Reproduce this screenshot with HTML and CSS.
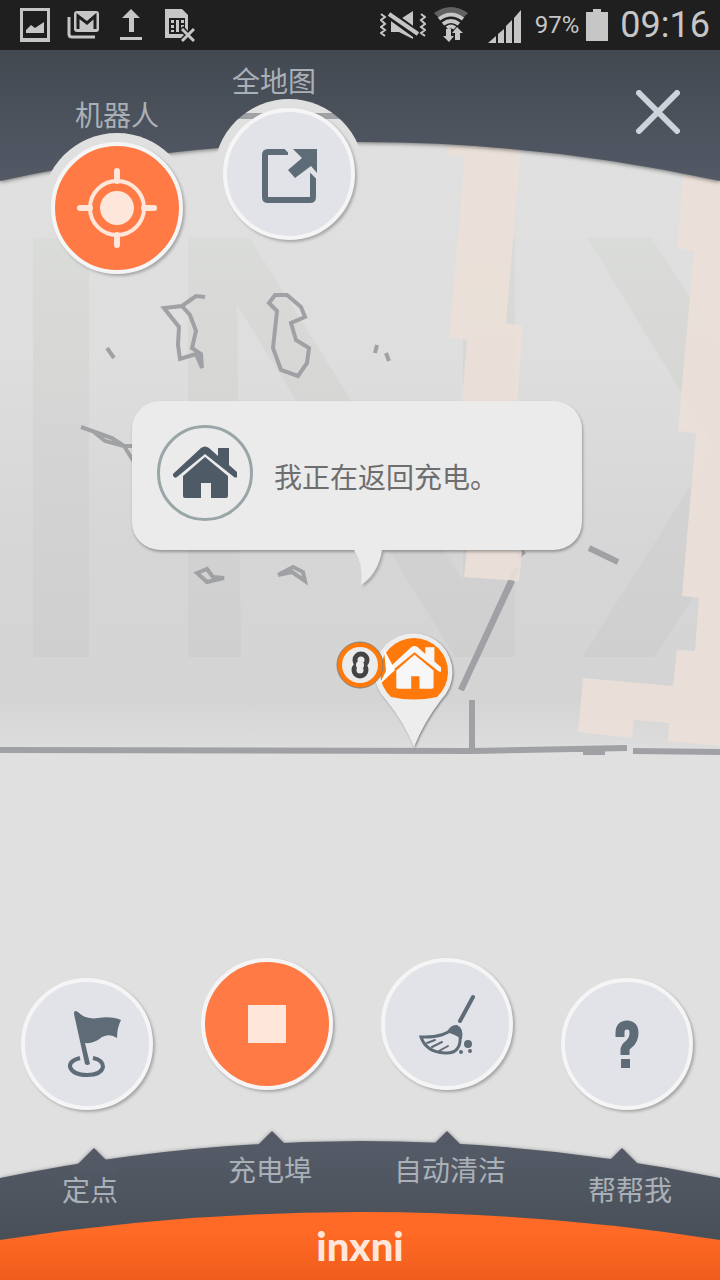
FILE: index.html
```html
<!DOCTYPE html>
<html lang="zh-CN">
  <head>
    <meta charset="UTF-8" />
    <meta name="viewport" content="width=device-width, initial-scale=1.0" />
    <title>inxni</title>

    <link rel="stylesheet" href="styles.css">
  </head>
  <body>
    <div class="status">
      <div class="status-left">
        <svg width="32" height="36" viewBox="0 0 32 36">
          <path d="M1 1h30v34H1zM4 4v27h24V4z" fill-rule="evenodd" />
          <path d="M7 26v-3l5-5 4 3 9-6v11z" />
        </svg>
        <svg width="32" height="36" viewBox="0 0 32 36">
          <path d="M2 10v17q0 3 3 3h23" class="line" stroke-width="3" />
          <rect x="7" y="4" width="25" height="21" rx="3" />
          <path d="M11 22V9l9 7 8-7v13" class="cut" stroke-width="3" />
        </svg>
        <svg width="32" height="36" viewBox="0 0 32 36">
          <path d="M16 2l9 9h-6v14h-5V11H7zM5 30h22v3H5z" />
        </svg>
        <svg width="32" height="36" viewBox="0 0 32 36">
          <path d="M2 2h17l6 6v23H2z" />
          <path d="M6 11h16v16H6z" class="dark" />
          <path d="M8 13h3v3H8zM8 18h3v3H8zM8 23h3v2H8zM13 13h3v12h-3zM18 13h3v3h-3zM18 18h3v3h-3z" />
          <path d="M18 21l14 14M32 21L18 35" class="cut" stroke-width="6" />
          <path d="M19 22l12 12M31 22L19 34" class="line" stroke-width="3" />
        </svg>
      </div>
      <div class="status-right">
        <svg width="46" height="36" viewBox="0 0 46 36">
          <path d="M1 7l4 3-4 3 4 4-4 3 4 3-4 3 4 3M41 7l4 3-4 3 4 4-4 3 4 3-4 3 4 3" class="line" stroke-width="2" />
          <path d="M11 13h8L33 4v28L19 25h-8z" />
          <path d="M9 7l29 21" class="cut" stroke-width="9" />
          <path d="M9 7l29 20" class="line" stroke-width="4" />
        </svg>
        <svg width="36" height="36" viewBox="0 0 36 36">
          <path d="M1 6q17-12 34 0l-4 4q-13-9-26 0z" opacity=".4" />
          <path d="M6 12q12-9 24 0M10 17q8-6 16 0M14 21q4-3 8 0" class="line" stroke-width="4" />
          <path d="M13 22h5v7h3l-5 6-6-6h3zM22 33v-7h-3l5-6 6 6h-3v7z" />
        </svg>
        <svg width="52" height="36" viewBox="0 0 52 36">
          <path d="M12 36l8-7v7zM22 27l6-5v14h-6zM30 19l6-6v23h-6zM38 11l7-8v33h-7z" />
        </svg>
        <span class="percent">97%</span>
        <svg width="22" height="36" viewBox="0 0 22 36">
          <path d="M0 5h7V2h8v3h7v29H0z" />
        </svg>
        <span class="clock">09:16</span>
      </div>
    </div>

    <div class="room">
      <svg class="map" viewBox="0 50 720 1230" preserveAspectRatio="xMidYMin slice">
        <defs>
          <linearGradient id="floor" x1="0" y1="140" x2="0" y2="760" gradientUnits="userSpaceOnUse">
            <stop offset="0" stop-color="#e0e0e0" />
            <stop offset=".35" stop-color="#dedede" />
            <stop offset=".65" stop-color="#d7d6d6" />
            <stop offset=".9" stop-color="#d4d4d4" />
            <stop offset="1" stop-color="#dfdfdf" />
          </linearGradient>
          <linearGradient id="mark" x1="0" y1="238" x2="0" y2="657" gradientUnits="userSpaceOnUse">
            <stop offset="0" stop-color="#dadcd9" />
            <stop offset=".5" stop-color="#d5d4d4" />
            <stop offset="1" stop-color="#d0cfcf" />
          </linearGradient>
          <symbol id="house" viewBox="0 0 64 54">
            <path d="M4 31a2 2 0 0 1-3-4L28 2q4-3 8 0l9 8V2h11v17l8 7a2 2 0 0 1-3 5L32 8z" />
            <path d="M10 30L32 11l23 19v20q0 2-2 2h-15V37H28v15H12q-2 0-2-2z" />
          </symbol>
        </defs>

        <rect y="50" width="720" height="1230" fill="#e0e0e0" />
        <rect y="140" width="720" height="611" fill="url(#floor)" />

        <g fill="url(#mark)">
          <path d="M33 238h56v419H33z" />
          <path d="M188 238h62l213 342V238h52v419h-60L237 305l4 352h-53z" />
          <path d="M587 238h65l68 107v210l-65 102h-73l133-210z" />
        </g>

        <g class="wall">
          <path class="thick" d="M461 690l56-122M518 556l6-5" />
        </g>
        <g class="zone">
          <path d="M448 130h74l-16 193 17 3-6 75 5 149-3 31-55-4 3-27-5-149 5-61-18-2 16-181-17-2z" />
          <path d="M684 165h36v581l-52-5 1-18-35-3-2 18-54-6 5-54 90 8 4-36 18 1 4-53-17-2 14-163-18-2 16-180-17-3z" />
        </g>
        <g class="wall">
          <path class="thick" d="M0 750l473 1M472 751l155-3M583 752h22M633 751l87 1M472 700v52" />
          <path class="thick" d="M461 690l51-109M589 548l29 14" />
          <path d="M205 297l-9-1-14 10-18 2 15 19-1 18 2 14 16-5 6 14-1-14-9-6 4-17-6-16-8-9" />
          <path d="M275 295h12l14 12 4 10-14 6 5 17 13 8-2 15-9 13-17-6-8-22 4-37-8-8z" />
          <path d="M107 348l7 10M377 345l-2 8M386 353l3 8" />
          <path d="M81 427l31 11 12 8h10M94 432l11 9 19 5 10 16" />
          <path d="M197 573l10-4 6 8 11 1-17 4zM278 575l15-8 10 5 2 9-13-9-14 3" />
        </g>

        <!-- charging dock -->
        <g class="dock">
          <path d="M414 747q-10-25-28-47a39 39 0 1 1 55 0q-17 22-27 47z" fill="#ededed" />
          <path d="M391 697a34 34 0 1 1 46 0q-23 5-46 0z" fill="#ff7a0a" />
          <use href="#house" x="388" y="644" width="53" height="48" fill="#f7f7f7" />
        </g>

        <!-- robot -->
        <circle cx="360" cy="665" r="23" fill="#ff7a0a" stroke="#85807c" />
        <circle cx="360" cy="665" r="18" fill="#ebebeb" />
        <circle cx="361" cy="660" r="6" class="robot" />
        <circle cx="360" cy="670" r="6" class="robot" />
        <circle cx="360" cy="665" r="4" fill="#ebebeb" />
        <path d="M384 649l11 21-16 15 7-14z" fill="#fff" />
      </svg>

      <header class="top">
        <svg class="arc" viewBox="0 0 720 132" preserveAspectRatio="none">
          <defs>
            <linearGradient id="slate" x1="0" y1="0" x2="0" y2="1">
              <stop offset="0" stop-color="#424951" />
              <stop offset="1" stop-color="#535a66" />
            </linearGradient>
          </defs>
          <path d="M0 0H720V131Q360 53 0 131Z" fill="url(#slate)" />
        </svg>
        <div class="views">
          <div class="item low">
            <span class="label" id="robot">机器人</span>
            <div class="halo">
              <button class="round on" aria-labelledby="robot">
                <svg width="80" height="80" viewBox="0 0 80 80">
                  <circle cx="40" cy="40" r="17" fill="#ffe6da" />
                  <g fill="none" stroke="#ffe6da" stroke-linecap="round">
                    <circle cx="40" cy="40" r="27" stroke-width="4" />
                    <path d="M40 3v10M40 67v10M3 40h10M67 40h10" stroke-width="6" />
                  </g>
                </svg>
              </button>
            </div>
          </div>
          <div class="item">
            <span class="label left" id="full">全地图</span>
            <div class="halo wall-behind">
              <button class="round" aria-labelledby="full">
                <svg width="60" height="60" viewBox="0 -2 60 60">
                  <path d="M29 6H9q-3 0-3 3v42q0 3 3 3h42q3 0 3-3V27" fill="none" stroke="#5e6c78" stroke-width="6" />
                  <path d="M27 1l13 13M49 21l12 12" stroke="#e2e3e8" stroke-width="5" />
                  <path d="M34 3h24v24l-6-7-16 12-7-8 14-12z" fill="#5e6c78" />
                </svg>
              </button>
            </div>
          </div>
        </div>
        <button class="close" aria-label="关闭">
          <svg width="44" height="44" viewBox="0 0 44 44">
            <path d="M3 3l38 38M41 3L3 41" stroke="#ccd3da" stroke-width="6" stroke-linecap="round" />
          </svg>
        </button>
      </header>

      <main>
        <div class="bubble">
          <div class="badge">
            <svg width="64" height="54"><use href="#house" width="64" height="54" fill="#4e5b67" /></svg>
          </div>
          <p>我正在返回充电。</p>
          <svg class="tail" width="30" height="36" viewBox="0 0 30 36">
            <path d="M0 0q10 15 7 35Q24 24 28 0z" fill="#ebebeb" />
          </svg>
        </div>
      </main>

      <footer class="bottom">
        <svg class="arc" viewBox="0 0 720 150" preserveAspectRatio="none">
          <defs>
            <linearGradient id="slate2" x1="0" y1="0" x2="0" y2="1">
              <stop offset="0" stop-color="#555c68" />
              <stop offset=".75" stop-color="#474e56" />
            </linearGradient>
            <linearGradient id="orange" x1="0" y1="0" x2="0" y2="1">
              <stop offset=".3" stop-color="#ff6a26" />
              <stop offset="1" stop-color="#f05c1a" />
            </linearGradient>
          </defs>
          <path d="M0 48Q360 -26 720 48V150H0Z" fill="url(#slate2)" />
          <path d="M70 42l24-24 24 24zM256 17l16-16 16 16zM431 17l16-16 16 16zM598 42l24-24 24 24z" fill="#535a66" />
          <path d="M0 110Q360 54 720 110V150H0Z" fill="url(#orange)" />
        </svg>
        <nav class="actions">
          <div class="item low">
            <button class="round" aria-labelledby="spot">
              <svg width="72" height="70" viewBox="-14 -1 72 70">
                <path d="M9 4q0-5 4-2 8 8 20 6 14-2 23 2-4 8-4 18-7-5-15-1-8 7-17 6l5 21q-3 2-5 0z" fill="#5e6c78" />
                <path d="M15 48q-11 3-10 9 3 8 17 8t16-8q0-7-10-9" fill="none" stroke="#5e6c78" stroke-width="4" />
              </svg>
            </button>
            <span class="label" id="spot">定点</span>
          </div>
          <div class="item">
            <button class="round on" aria-labelledby="charge">
              <svg width="38" height="38"><rect width="38" height="38" fill="#ffe6da" /></svg>
            </button>
            <span class="label" id="charge">充电埠</span>
          </div>
          <div class="item">
            <button class="round" aria-labelledby="clean">
              <svg width="58" height="62" viewBox="-1 -1 58 62">
                <g fill="none" stroke="#5e6c78" stroke-linecap="round">
                  <path d="M54 3L41 27" stroke-width="4" />
                  <path d="M34 34q-9 10-32 9 5 15 24 16 17 1 15-19" stroke-width="3" />
                  <path d="M8 49l8-3M13 53l10-5M20 57l9-5" stroke-width="2" />
                </g>
                <path d="M28 38q4-8 10-7 7 3 5 14-6-4-15-7z" fill="#5e6c78" />
                <g fill="#5e6c78">
                  <circle cx="49" cy="50" r="4" />
                  <circle cx="42" cy="58" r="2" />
                  <circle cx="51" cy="57" r="2" />
                </g>
              </svg>
            </button>
            <span class="label" id="clean">自动清洁</span>
          </div>
          <div class="item low">
            <button class="round" aria-labelledby="help">
              <svg width="24" height="48" viewBox="0 0 24 48">
                <path d="M5 17v-4q0-8 7-8t7 8q0 7-5 11-4 3-4 6v5" fill="none" stroke="#5e6c78" stroke-width="9" />
                <path d="M6 39h9v9H6z" fill="#5e6c78" />
              </svg>
            </button>
            <span class="label" id="help">帮帮我</span>
          </div>
        </nav>
        <div class="brand">inxni</div>
      </footer>
    </div>
  </body>
</html>
```
FILE: styles.css
```css
*,
*::before,
*::after {
  box-sizing: border-box;
  margin: 0;
  padding: 0;
}

body {
  min-height: 100vh;
  display: flex;
  flex-direction: column;
  background-color: #e0e0e0;
  font-family: "Noto Sans CJK SC", sans-serif;
}

svg {
  display: block;
}

button {
  border: 0;
  background: none;
  cursor: pointer;
}

/* status bar */

.status {
  height: 50px;
  padding: 0 10px 0 19px;
  display: flex;
  justify-content: space-between;
  align-items: center;
  background-color: #1f1f1f;
  color: #c6c6c6;
  fill: #c6c6c6;
  font-family: Roboto, sans-serif;
}

.status-left {
  display: flex;
  gap: 16px;
}

.status-right {
  display: flex;
  align-items: center;
  gap: 7px;
}

.status .line {
  fill: none;
  stroke: #c6c6c6;
}

.status .cut {
  fill: none;
  stroke: #1f1f1f;
}

.status .dark {
  fill: #1f1f1f;
}

.percent {
  font-size: 24px;
}

.clock {
  margin-left: 5px;
  font-size: 36px;
}

/* map */

.room {
  position: relative;
  flex: 1;
  display: flex;
  flex-direction: column;
  overflow: hidden;
}

.map {
  position: absolute;
  inset: 0;
  width: 100%;
  height: 100%;
}

.wall {
  fill: none;
  stroke: #9fa1a5;
  stroke-width: 4px;
}

.wall .thick {
  stroke-width: 6px;
}

.zone {
  fill: #ebe0d8;
  fill-opacity: 0.9;
}

.robot {
  fill: none;
  stroke: #444;
  stroke-width: 5px;
}

.dock {
  filter: drop-shadow(1px 1px 1px rgba(0, 0, 0, 0.4));
}

/* round buttons */

.item {
  display: flex;
  flex-direction: column;
  align-items: center;
}

.label {
  color: #a9b0b8;
  font-size: 28px;
  line-height: 34px;
}

.round {
  width: 132px;
  height: 132px;
  display: grid;
  place-items: center;
  border: 4px solid #f5f5f5;
  border-radius: 50%;
  background-color: #e2e3e8;
  box-shadow: 2px 2px 3px rgba(0, 0, 0, 0.25);
}

.round.on {
  background-color: #ff7a45;
}

.halo {
  padding: 9px;
  border-radius: 50%;
  background-image: linear-gradient(#e0e0e0 50%, transparent 50%);
}

.wall-behind {
  background-image:
    linear-gradient(transparent 14px, #9fa1a5 14px, #9fa1a5 20px, transparent 20px),
    linear-gradient(#e0e0e0 50%, transparent 50%);
}

/* top */

.top {
  position: relative;
  padding: 13px 40px 0 42px;
  display: flex;
  justify-content: space-between;
  align-items: flex-start;
}

.arc {
  position: absolute;
  left: 0;
  width: 100%;
  filter: drop-shadow(0 1px 2px rgba(0, 0, 0, 0.5));
}

.top .arc {
  top: 0;
  height: 132px;
}

.views {
  position: relative;
  display: flex;
  align-items: flex-start;
  gap: 22px;
}

.views .low {
  margin-top: 34px;
}

.views .label {
  padding-bottom: 2px;
}

.views .left {
  padding-right: 30px;
}

.close {
  position: relative;
  margin-top: 27px;
}

/* message */

main {
  flex: 1;
  padding: 118px 138px 0 132px;
}

.bubble {
  position: relative;
  min-height: 149px;
  padding: 0 25px 6px;
  display: flex;
  align-items: center;
  gap: 21px;
  border-radius: 28px;
  background-color: #ebebeb;
  box-shadow: 1px 2px 3px rgba(0, 0, 0, 0.3);
}

.badge {
  width: 96px;
  height: 96px;
  display: grid;
  place-items: center;
  border: 3px solid #9aa5a8;
  border-radius: 50%;
}

.bubble p {
  padding-top: 6px;
  color: #6e6e6e;
  font-size: 28px;
  line-height: 34px;
}

.tail {
  position: absolute;
  top: 100%;
  left: 50%;
  margin-left: -3px;
  filter: drop-shadow(2px 2px 1px rgba(0, 0, 0, 0.2));
}

/* bottom */

.bottom {
  position: relative;
}

.bottom .arc {
  bottom: 0;
  height: 150px;
}

.actions {
  position: relative;
  display: grid;
  grid-template-columns: repeat(4, 1fr);
  align-items: start;
}

.actions .low {
  margin-top: 20px;
}

.actions .round {
  margin: 0 6px 62px 0;
}

.brand {
  position: relative;
  height: 74px;
  color: #ffe6da;
  font-family: Lato, sans-serif;
  font-size: 40px;
  font-weight: 900;
  line-height: 80px;
  text-align: center;
}
```
